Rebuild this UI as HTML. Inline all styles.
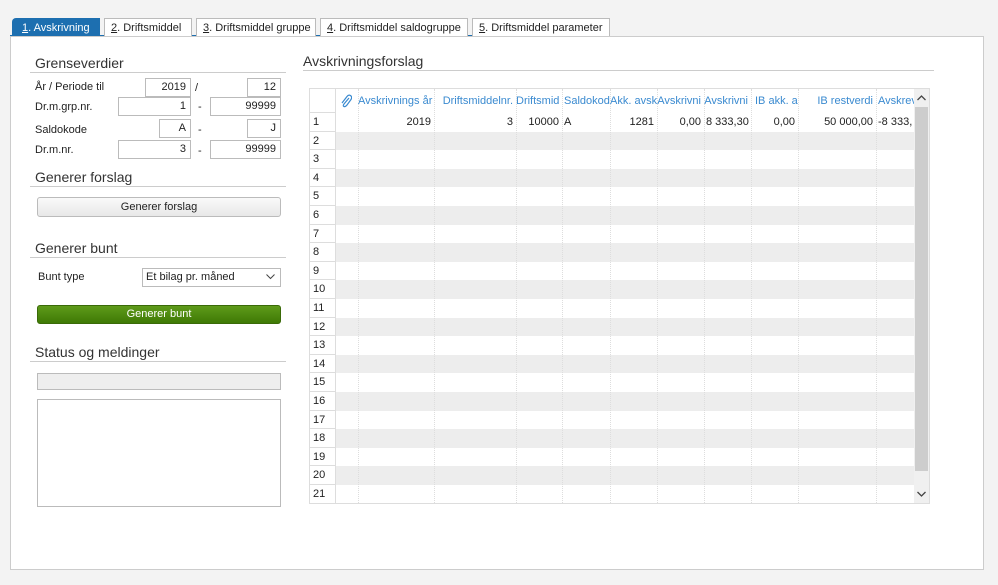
<!DOCTYPE html>
<html><head><meta charset="utf-8"><style>
*{box-sizing:border-box;margin:0;padding:0}
body{width:998px;height:585px;background:#f3f3f3;font-family:"Liberation Sans",Arial,sans-serif;font-size:11px;color:#222;position:relative;overflow:hidden}
.a{position:absolute}
.tab{position:absolute;top:18px;height:18px;line-height:18px;font-size:11px;padding:0 6px;background:#fff;border:1px solid #bbb;border-bottom:none;white-space:nowrap;overflow:hidden}
.panel{left:10px;top:36px;width:974px;height:534px;background:#fff;border:1px solid #ccc}
.h{font-size:14px;color:#333}
.ln{height:1px;background:#ccc}
.inp{position:absolute;border:1px solid #bbb;height:19px;text-align:right;padding-right:4px;line-height:17px;background:#fff}
.lbl{position:absolute}
.btn{position:absolute;border:1px solid #bbb;border-radius:3px;background:linear-gradient(#fafafa,#e8e8e8);text-align:center;line-height:18px}
.grid{left:309px;top:88px;width:621px;height:416px;border:1px solid #ddd;background:#fff}
.row{position:absolute;left:0;width:604px;height:18.6px;line-height:18.6px}
.row.g{background:#ededed}
.rn{position:absolute;left:0;width:26px;padding-left:3px;background:#fff;border-right:1px solid #ddd;border-bottom:1px solid #ddd;height:18.6px}
.vl{position:absolute;top:0;width:0;height:414px;border-left:1px dotted #ddd}
.hd{position:absolute;top:0;height:24px;line-height:24px;color:#3a8ad0;white-space:nowrap;overflow:hidden;text-align:right;padding-right:3px}
.c{position:absolute;top:0;text-align:right;padding-right:3px;white-space:nowrap;overflow:hidden}
</style></head><body>
<div class="a" style="left:10px;top:35px;width:600px;height:2px;background:#1d6fb0"></div>
<div class="tab" style="left:12px;width:88px;background:#1d6fb0;color:#fff;border-color:#1d6fb0;border-radius:4px 0 0 0;padding-left:9px"><u>1</u>. Avskrivning</div>
<div class="tab" style="left:104px;width:88px"><u>2</u>. Driftsmiddel</div>
<div class="tab" style="left:196px;width:120px"><u>3</u>. Driftsmiddel gruppe</div>
<div class="tab" style="left:320px;width:148px"><u>4</u>. Driftsmiddel saldogruppe</div>
<div class="tab" style="left:472px;width:138px"><u>5</u>. Driftsmiddel parameter</div>
<div class="a panel"></div>

<div class="a h" style="left:35px;top:55px">Grenseverdier</div>
<div class="a ln" style="left:30px;top:72px;width:256px"></div>
<div class="lbl" style="left:35px;top:81px">År / Periode til</div>
<div class="inp" style="left:145px;top:78px;width:46px">2019</div>
<div class="lbl" style="left:195px;top:82px">/</div>
<div class="inp" style="left:247px;top:78px;width:34px">12</div>
<div class="lbl" style="left:35px;top:101px">Dr.m.grp.nr.</div>
<div class="inp" style="left:118px;top:97px;width:73px">1</div>
<div class="lbl" style="left:198px;top:101px">-</div>
<div class="inp" style="left:210px;top:97px;width:71px">99999</div>
<div class="lbl" style="left:35px;top:124px">Saldokode</div>
<div class="inp" style="left:159px;top:119px;width:32px">A</div>
<div class="lbl" style="left:198px;top:124px">-</div>
<div class="inp" style="left:247px;top:119px;width:34px">J</div>
<div class="lbl" style="left:35px;top:144px">Dr.m.nr.</div>
<div class="inp" style="left:118px;top:140px;width:73px">3</div>
<div class="lbl" style="left:198px;top:145px">-</div>
<div class="inp" style="left:210px;top:140px;width:71px">99999</div>

<div class="a h" style="left:35px;top:169px">Generer forslag</div>
<div class="a ln" style="left:30px;top:186px;width:256px"></div>
<div class="btn" style="left:37px;top:197px;width:244px;height:20px">Generer forslag</div>

<div class="a h" style="left:35px;top:240px">Generer bunt</div>
<div class="a ln" style="left:30px;top:257px;width:256px"></div>
<div class="lbl" style="left:38px;top:271px">Bunt type</div>
<div class="a" style="left:142px;top:268px;width:139px;height:19px;border:1px solid #bbb;padding-left:3px;line-height:17px">Et bilag pr. måned<svg style="position:absolute;right:5px;top:5px" width="9" height="6"><path d="M0.5 0.5L4.5 4.5L8.5 0.5" stroke="#444" fill="none"/></svg></div>
<div class="a" style="left:37px;top:305px;width:244px;height:19px;border-radius:3px;background:linear-gradient(#5e9a1a,#3f7a05);border:1px solid #3a6a08;color:#fff;text-align:center;line-height:17px">Generer bunt</div>

<div class="a h" style="left:35px;top:344px">Status og meldinger</div>
<div class="a ln" style="left:30px;top:361px;width:256px"></div>
<div class="a" style="left:37px;top:373px;width:244px;height:17px;border:1px solid #bbb;background:#eee"></div>
<div class="a" style="left:37px;top:399px;width:244px;height:108px;border:1px solid #bbb;background:#fff"></div>

<div class="a h" style="left:303px;top:53px">Avskrivningsforslag</div>
<div class="a ln" style="left:303px;top:70px;width:631px"></div>

<div class="a grid">
<div class="row" style="top:0;height:24px;background:#fff"><div class="rn" style="height:24px"></div>
<svg style="position:absolute;left:30px;top:5px" width="12" height="14"><path d="M9 4L4 10Q2.5 12 4 12.5Q5.5 13 7 11L11 5.5Q12.5 3 10.5 1.5Q8.5 0.5 7 2.5L2 9" stroke="#3a8ad0" fill="none" stroke-width="1.2"/></svg>
<div class="hd" style="left:48px;width:76px">Avskrivnings år</div>
<div class="hd" style="left:124px;width:82px">Driftsmiddelnr.</div>
<div class="hd" style="left:206px;width:46px">Driftsmid</div>
<div class="hd" style="left:252px;width:48px;text-align:left;padding-left:2px">Saldokod</div>
<div class="hd" style="left:300px;width:47px">Akk. avsk</div>
<div class="hd" style="left:347px;width:47px">Avskrivni</div>
<div class="hd" style="left:394px;width:47px">Avskrivni</div>
<div class="hd" style="left:441px;width:47px;text-align:left;padding-left:4px">IB akk. a</div>
<div class="hd" style="left:488px;width:78px">IB restverdi</div>
<div class="hd" style="left:566px;width:38px;text-align:left;padding-left:2px">Avskrev</div>
</div>
<div class="row" style="top:24px"><div class="rn">1</div>
<div class="c" style="left:48px;width:76px">2019</div>
<div class="c" style="left:124px;width:82px">3</div>
<div class="c" style="left:206px;width:46px">10000</div>
<div class="c" style="left:252px;width:48px;text-align:left;padding-left:2px">A</div>
<div class="c" style="left:300px;width:47px">1281</div>
<div class="c" style="left:347px;width:47px">0,00</div>
<div class="c" style="left:394px;width:47px;text-align:left;padding-left:2px">8 333,30</div>
<div class="c" style="left:441px;width:47px">0,00</div>
<div class="c" style="left:488px;width:78px">50 000,00</div>
<div class="c" style="left:566px;width:38px;text-align:left;padding-left:2px">-8 333,</div>
</div>
<div class="row g" style="top:42.6px"><div class="rn">2</div></div>
<div class="row" style="top:61.2px"><div class="rn">3</div></div>
<div class="row g" style="top:79.8px"><div class="rn">4</div></div>
<div class="row" style="top:98.4px"><div class="rn">5</div></div>
<div class="row g" style="top:117px"><div class="rn">6</div></div>
<div class="row" style="top:135.6px"><div class="rn">7</div></div>
<div class="row g" style="top:154.2px"><div class="rn">8</div></div>
<div class="row" style="top:172.8px"><div class="rn">9</div></div>
<div class="row g" style="top:191.4px"><div class="rn">10</div></div>
<div class="row" style="top:210px"><div class="rn">11</div></div>
<div class="row g" style="top:228.6px"><div class="rn">12</div></div>
<div class="row" style="top:247.2px"><div class="rn">13</div></div>
<div class="row g" style="top:265.8px"><div class="rn">14</div></div>
<div class="row" style="top:284.4px"><div class="rn">15</div></div>
<div class="row g" style="top:303px"><div class="rn">16</div></div>
<div class="row" style="top:321.6px"><div class="rn">17</div></div>
<div class="row g" style="top:340.2px"><div class="rn">18</div></div>
<div class="row" style="top:358.8px"><div class="rn">19</div></div>
<div class="row g" style="top:377.4px"><div class="rn">20</div></div>
<div class="row" style="top:396px"><div class="rn">21</div></div>
<div class="vl" style="left:48px"></div><div class="vl" style="left:124px"></div><div class="vl" style="left:206px"></div><div class="vl" style="left:252px"></div><div class="vl" style="left:300px"></div><div class="vl" style="left:347px"></div><div class="vl" style="left:394px"></div><div class="vl" style="left:441px"></div><div class="vl" style="left:488px"></div><div class="vl" style="left:566px"></div>
<div class="a" style="left:604px;top:0;width:15px;height:414px;background:#f0f0f0"></div>
<div class="a" style="left:605px;top:18px;width:13px;height:364px;background:#cdcdcd"></div>
<svg class="a" style="left:607px;top:6px" width="9" height="6"><path d="M0.5 5L4.5 1L8.5 5" stroke="#444" fill="none" stroke-width="1.3"/></svg>
<svg class="a" style="left:607px;top:402px" width="9" height="6"><path d="M0.5 1L4.5 5L8.5 1" stroke="#444" fill="none" stroke-width="1.3"/></svg>
</div>
</body></html>
